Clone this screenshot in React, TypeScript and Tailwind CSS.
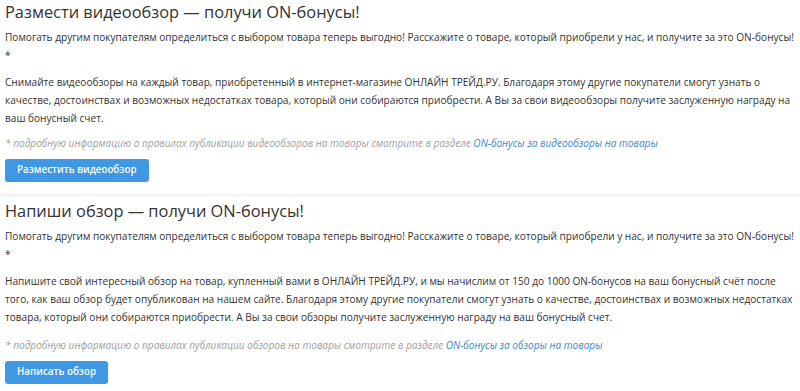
const sections = [
  {
    title: 'Размести видеообзор — получи ON-бонусы!',
    body: 'Снимайте видеообзоры на каждый товар, приобретенный в интернет-магазине ОНЛАЙН ТРЕЙД.РУ. Благодаря этому другие покупатели смогут узнать о качестве, достоинствах и возможных недостатках товара, который они собираются приобрести. А Вы за свои видеообзоры получите заслуженную награду на ваш бонусный счет.',
    note: '* подробную информацию о правилах публикации видеообзоров на товары смотрите в разделе ',
    link: 'ON-бонусы за видеообзоры на товары',
    button: 'Разместить видеообзор',
  },
  {
    title: 'Напиши обзор — получи ON-бонусы!',
    body: 'Напишите свой интересный обзор на товар, купленный вами в ОНЛАЙН ТРЕЙД.РУ, и мы начислим от 150 до 1000 ON-бонусов на ваш бонусный счёт после того, как ваш обзор будет опубликован на нашем сайте. Благодаря этому другие покупатели смогут узнать о качестве, достоинствах и возможных недостатках товара, который они собираются приобрести. А Вы за свои обзоры получите заслуженную награду на ваш бонусный счет.',
    note: '* подробную информацию о правилах публикации обзоров на товары смотрите в разделе ',
    link: 'ON-бонусы за обзоры на товары',
    button: 'Написать обзор',
  },
];

export default function App() {
  return (
    <div className="w-[800px] h-[391px] overflow-hidden bg-white text-[#333] font-['Open_Sans',sans-serif]">
      {sections.map((s, i) => (
        <div
          key={i}
          className={i > 0 ? 'pl-[5px] pt-[2px] border-t-[3px] border-[#f5f5f5]' : 'pl-[5px] pb-[12px]'}
        >
          <h2 className="text-[16.4px] leading-[24px] mb-[4px]">{s.title}</h2>
          <p className="text-[10.1px] leading-[18px]">
            Помогать другим покупателям определиться с выбором товара теперь выгодно! Расскажите о товаре, который приобрели у нас, и получите за это ON&#8209;бонусы! *
          </p>
          <p className="text-[10.1px] leading-[18px] mt-[9px] pr-[4px]">{s.body}</p>
          <p className={`text-[10.1px] leading-[18px] italic text-[#a0a0a0] ${i > 0 ? 'mt-[10px]' : 'mt-[7px]'}`}>
            {s.note}
            <a className="text-[#3e86c6]">{s.link}</a>
          </p>
          <button className="mt-[7px] h-[23px] px-[12px] rounded-[3px] bg-[#3e98e3] text-white text-[9.8px] font-semibold">
            {s.button}
          </button>
        </div>
      ))}
    </div>
  );
}
